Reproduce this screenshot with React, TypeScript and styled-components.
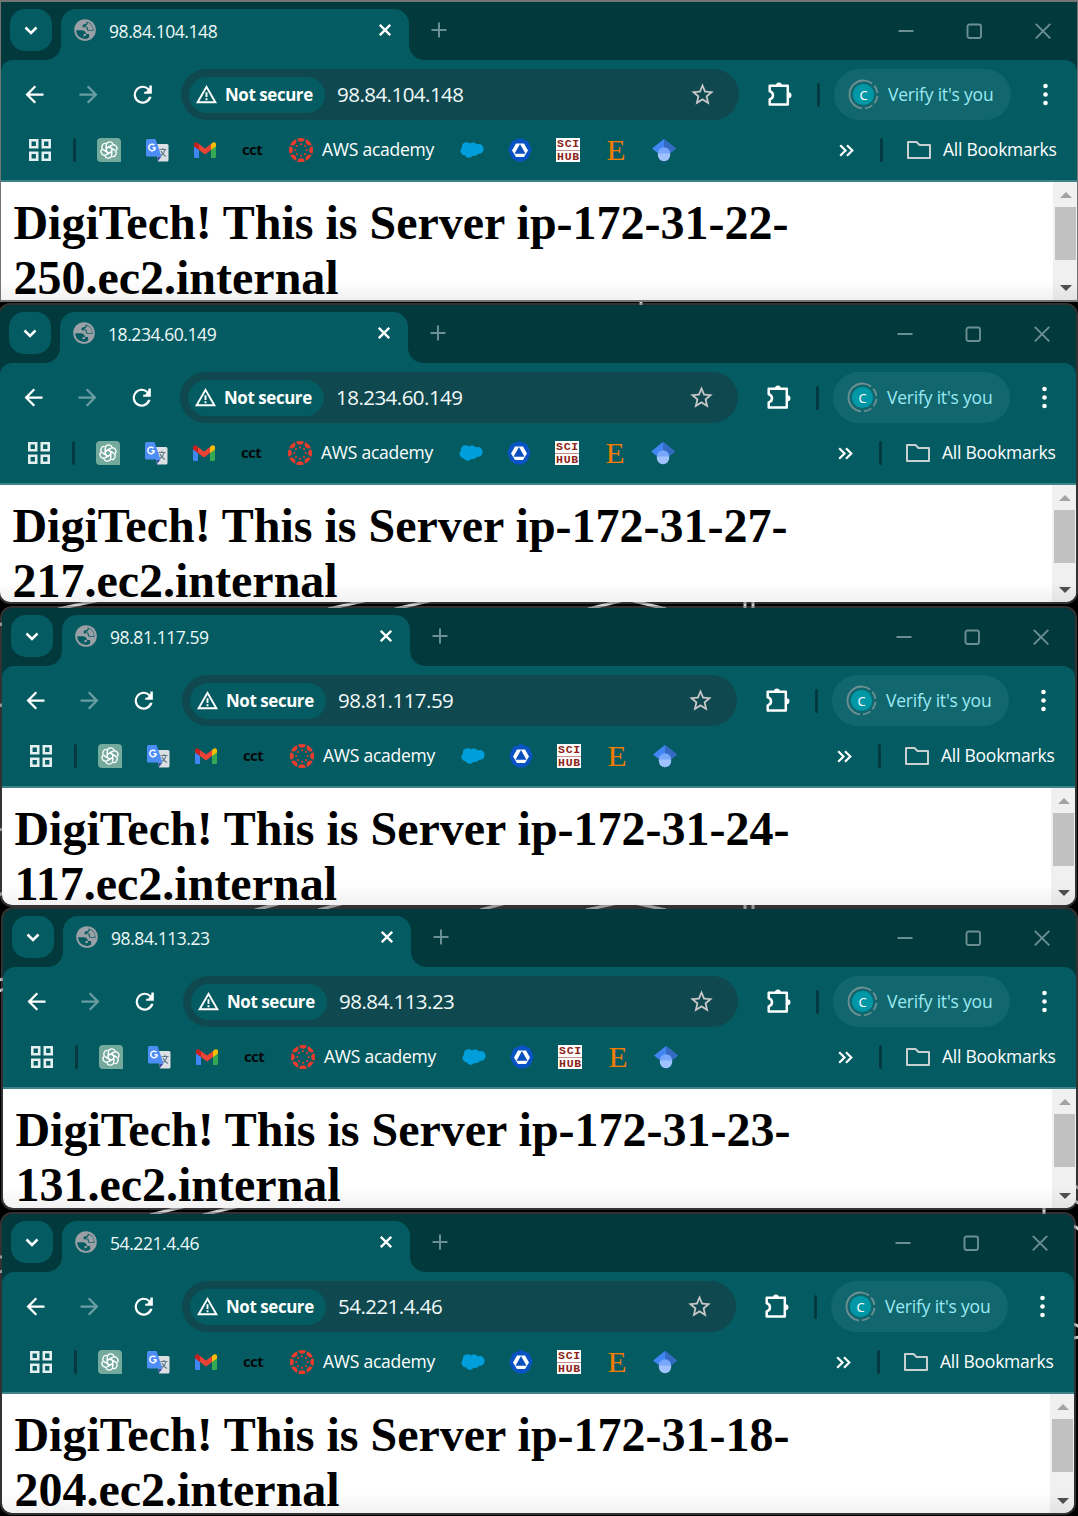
import React from "react";
import styled, { createGlobalStyle } from "styled-components";

const UI_FONT = '"Segoe UI", "Open Sans", "Noto Sans", sans-serif';

const c = {
  strip: "#02393d",
  frame: "#045c62",
  omnibox: "#0f484f",
  pill: "#11676d",
  edge: "#3e8389",
  divider: "#023a3f",
  muted: "#6b8f92",
  white: "#ffffff",
};

const GlobalStyle = createGlobalStyle`
  html, body { margin: 0; padding: 0; background: #000; }
  * { box-sizing: border-box; }
  svg { display: block; flex: none; }
`;

const Desktop = styled.main`
  position: relative;
  width: 1078px;
  height: 1516px;
  overflow: hidden;
  background: #000;
  display: flex;
  flex-direction: column;
  font-family: ${UI_FONT};
`;

const Wallpaper = styled.svg`
  position: absolute;
  inset: 0;
`;

interface Frame {
  left: number;
  right: number;
  gap: number;
  height: number;
  square?: boolean;
}

const Window = styled.section<{ $f: Frame }>`
  position: relative;
  flex: none;
  display: flex;
  flex-direction: column;
  height: ${(p) => p.$f.height}px;
  margin: ${(p) => p.$f.gap}px ${(p) => p.$f.right}px 0 ${(p) => p.$f.left}px;
  border-style: solid;
  border-color: ${(p) => (p.$f.square ? "#747474" : "rgba(100, 100, 100, 0.5)")};
  border-width: ${(p) => (p.$f.square ? "2px 1px" : "2px")};
  border-radius: ${(p) => (p.$f.square ? 0 : 12)}px;
  background: ${c.strip};
  background-clip: padding-box;
  overflow: hidden;
`;

const TabStrip = styled.header`
  flex: none;
  height: 58px;
  display: flex;
  padding: 7px 25px 0 9px;
`;

const TabSearch = styled.button`
  width: 42px;
  height: 42px;
  margin: 0 9px 0 0;
  padding: 0;
  border: 0;
  border-radius: 15px;
  background: ${c.frame};
  display: grid;
  place-items: center;
`;

const Tab = styled.div`
  position: relative;
  width: 348px;
  height: 51px;
  padding: 0 18px 9px 13px;
  display: flex;
  align-items: center;
  border-radius: 15px 15px 0 0;
  background: ${c.frame};
  &::before,
  &::after {
    content: "";
    position: absolute;
    bottom: 0;
    width: 15px;
    height: 15px;
  }
  &::before {
    left: -15px;
    background: radial-gradient(circle at 0 0, transparent 14.5px, ${c.frame} 15.2px);
  }
  &::after {
    right: -15px;
    background: radial-gradient(circle at 100% 0, transparent 14.5px, ${c.frame} 15.2px);
  }
`;

const TabTitle = styled.span`
  flex: 1;
  margin-left: 13px;
  padding-top: 2px;
  font-size: 17.5px;
  letter-spacing: -0.43px;
  line-height: 24px;
  color: #eef8f8;
`;

const NewTab = styled.div`
  width: 42px;
  height: 42px;
  margin-left: 9px;
  display: grid;
  place-items: center;
`;

const Controls = styled.div`
  margin-left: auto;
  height: 44px;
  display: flex;
  align-items: center;
  gap: 51px;
`;

const Chrome = styled.div`
  flex: none;
  height: 122px;
  background: ${c.frame};
  border-bottom: 2px solid ${c.edge};
  border-radius: 12px 12px 0 0;
`;

const Toolbar = styled.div`
  height: 69px;
  padding: 9px 18.5px 9px 19.5px;
  display: flex;
  align-items: center;
`;

const Nav = styled.nav`
  display: flex;
  gap: 27px;
  margin-right: 25.5px;
`;

const Omnibox = styled.div`
  flex: 1;
  height: 51px;
  padding: 0 23px 0 8px;
  border-radius: 26px;
  background: ${c.omnibox};
  display: flex;
  align-items: center;
`;

const SecurityChip = styled.div`
  width: 136px;
  height: 36px;
  padding-left: 6px;
  border-radius: 18px;
  background: ${c.frame};
  display: flex;
  align-items: center;
  gap: 7px;
  font-size: 16.9px;
  font-weight: 700;
  letter-spacing: -0.4px;
  color: #fff;
  white-space: nowrap;
  span {
    padding-bottom: 1px;
  }
`;

const Address = styled.span`
  flex: 1;
  margin-left: 12px;
  padding-bottom: 2px;
  font-size: 20.5px;
  letter-spacing: -0.53px;
  line-height: 30px;
  color: #f2fafa;
`;

const Divider = styled.i<{ $l: number; $r: number }>`
  width: 3px;
  height: 24px;
  margin: 0 ${(p) => p.$r}px 0 ${(p) => p.$l}px;
  border-radius: 2px;
  background: ${c.divider};
`;

const Extensions = styled.div`
  margin-left: 27px;
`;

const Profile = styled.div`
  width: 177px;
  height: 51px;
  padding-left: 14px;
  margin-right: 20.5px;
  border-radius: 26px;
  background: ${c.pill};
  display: flex;
  align-items: center;
  gap: 9px;
  font-size: 17.5px;
  letter-spacing: -0.2px;
  color: #9be9f4;
  white-space: nowrap;
`;

const Lifted = styled.span`
  padding-bottom: 2px;
`;

const Avatar = styled.div`
  position: relative;
  width: 31px;
  height: 31px;
  display: grid;
  place-items: center;
  color: #fff;
  font: 13px/16px "Noto Sans", sans-serif;
  svg {
    position: absolute;
    inset: 0;
  }
  span {
    position: relative;
  }
`;

const Bookmarks = styled.div`
  height: 42px;
  padding: 0 21px 0 28px;
  display: flex;
  align-items: center;
  color: #fff;
  font-size: 17.5px;
  letter-spacing: -0.24px;
  white-space: nowrap;
`;

const Links = styled.div`
  display: flex;
  align-items: center;
  gap: 24px;
`;

const Labelled = styled.div<{ $gap: number; $w: number }>`
  display: flex;
  align-items: center;
  gap: ${(p) => p.$gap}px;
  width: ${(p) => p.$w}px;
`;

const Cct = styled.span`
  width: 24px;
  text-align: center;
  font: 700 15px ${UI_FONT};
  letter-spacing: -0.6px;
  color: #04090a;
  padding: 0 2px 3px 0;
`;

const SciHub = styled.div`
  width: 24px;
  height: 24px;
  background: #fff;
  color: #8b2418;
  font: 700 11.5px/12px "Liberation Mono", monospace;
  text-align: center;
  letter-spacing: 0.7px;
  display: flex;
  flex-direction: column;
  span {
    height: 12px;
    padding-left: 1px;
  }
  span + span {
    border-top: 1px solid #c78e88;
  }
`;

const Elsevier = styled.span`
  width: 24px;
  text-align: center;
  font: 30px/24px "Liberation Serif", serif;
  color: #f57c00;
  transform: scaleX(1.04);
`;

const Page = styled.div`
  flex: 1;
  min-height: 0;
  display: flex;
  background: #fff;
  position: relative;
  &::after {
    content: "";
    position: absolute;
    left: 0;
    right: 0;
    bottom: 0;
    height: 20px;
    background: linear-gradient(rgba(0, 0, 0, 0), rgba(0, 0, 0, 0.055));
  }
`;

const Heading = styled.h1`
  flex: 1;
  margin: 0;
  padding: 13px 12px 0 12.4px;
  font: 700 48px/55px "Liberation Serif", "Times New Roman", serif;
  color: #000;
`;

const Scrollbar = styled.div`
  width: 24px;
  background: #f0f0f0;
  display: flex;
  flex-direction: column;
  align-items: center;
  padding: 10px 0 9px 1px;
`;

const Thumb = styled.div`
  width: 21px;
  height: 53px;
  margin: 9px 0 auto;
  background: #c1c1c1;
`;

const Arrow = styled.i<{ $down?: boolean }>`
  border: 6px solid transparent;
  border-top: ${(p) => (p.$down ? "6px solid #4f4f4f" : "0")};
  border-bottom: ${(p) => (p.$down ? "0" : "6px solid #a3a3a3")};
`;

const Glyph = ({ d, size = 27, color = c.white }: { d: string; size?: number; color?: string }) => (
  <svg width={size} height={size} viewBox="0 0 24 24" fill={color} fillRule="evenodd">
    <path d={d} />
  </svg>
);

const BACK = "M20 11H7.83l5.59-5.59L12 4l-8 8 8 8 1.41-1.41L7.83 13H20z";
const FORWARD = "M12 4l-1.41 1.41L16.17 11H4v2h12.17l-5.58 5.59L12 20l8-8z";
const RELOAD =
  "M17.9 6.6A8 8 0 1 0 20 14h-2.200A6 6 0 1 1 16.600 8.100L15.200 9.500H13.500V11.300H20.300V4H18.200z";
const STAR =
  "M22 9.24l-7.19-.62L12 2 9.19 8.63 2 9.24l5.46 4.73L5.82 21 12 17.27 18.18 21l-1.63-7.03zM12 15.4l-3.76 2.27 1-4.28-3.32-2.88 4.38-.38L12 6.1l1.71 4.04 4.38.38-3.32 2.88 1 4.28z";
const WARNING = "M1 21L12 2l11 19zM4.5 19h15L12 6zM11 9.7h2v5h-2zM11 16h2v2h-2z";

const Globe = () => (
  <svg width="22" height="22" viewBox="0 0 22 22">
    <circle cx="11" cy="11" r="10.8" fill="#9aa0a6" />
    <path
      d="M2.200 11.200h5.300c2.800 0 4.300 1.400 4.400 3.800H9.500v4.600C5 18.800 2.200 15.300 2.200 11.200zM12.600 2.400c.3 1.900-.4 2.700-1.800 2.800-1.400 0-2.200.6-2.200 1.700v1.300h2.900c.8 0 1.200.4 1.200 1.200 0 1.600.9 2.400 2.400 2.400h4.500c0-4.800-3-8.500-7-9.400z"
      fill={c.frame}
    />
    <path
      d="M13.700 3.600c2.800.9 5 3.500 5.400 6.700-1 .9-2.300 1-3.700.8-1.300-.2-1.700-1-1.700-2.200 0-.8-.4-1.400-1.200-1.400h-1.600c.2-.8.8-.9 1.500-1.200.9-.5 1.300-1.400 1.300-2.700z"
      fill="#9aa0a6"
    />
    <path d="M11.900 15h3.200v3.600l-1.600 1c-1.500.5-2.700.6-4 .3V17h2.400z" fill={c.frame} />
  </svg>
);

const Grid = () => (
  <svg width="22" height="22" fill="none" stroke="#e4f0f0" strokeWidth="2.6">
    <path d="M1.3 1.3h6.9v6.9H1.3zM13.8 1.3h6.9v6.9h-6.9zM1.3 13.8h6.9v6.9H1.3zM13.8 13.8h6.9v6.9h-6.9z" />
  </svg>
);

const ChatGpt = () => (
  <svg width="24" height="24" viewBox="0 0 24 24">
    <path d="M4 0h16a4 4 0 0 1 4 4v20H4a4 4 0 0 1-4-4V4a4 4 0 0 1 4-4z" fill="#74aa9c" />
    <g fill="none" stroke="#fff" strokeWidth="1.25" strokeLinejoin="round">
      {[0, 60, 120, 180, 240, 300].map((a) => (
        <path
          key={a}
          transform={`rotate(${a} 12 12)`}
          d="M9.3 13.6V7.3c0-4 5.6-4.8 6.7-1.3M9.3 10.4L14.6 7.4"
        />
      ))}
    </g>
  </svg>
);

const Translate = () => (
  <svg width="24" height="24" viewBox="0 0 24 24">
    <path d="M11 6h11a1.500 1.500 0 0 1 1.500 1.500V22a1.500 1.500 0 0 1-1.500 1.500H13z" fill="#dcdfe3" />
    <path d="M12.500 18.500h4L13 23z" fill="#3949ab" />
    <path d="M2.500 1h8l6 17.500h-14A1.500 1.500 0 0 1 1 17V2.500A1.500 1.500 0 0 1 2.500 1z" fill="#4c8df6" />
    <path d="M10.500 9.700H7.500M10.400 9.700A3.300 3.300 0 1 1 9.500 7.200" fill="none" stroke="#fff" strokeWidth="1.500" />
    <path d="M14.500 11.500h7M18 10v1.500M20 11.500c-.5 2.800-2.500 5-4 6M16 13c1 2.500 3 4.500 5 5.500" fill="none" stroke="#607d8b" strokeWidth="1.200" />
  </svg>
);

const Gmail = () => (
  <svg width="24" height="24" viewBox="0 0 24 24">
    <path d="M1 8l5 3.500V20H2.500A1.500 1.500 0 0 1 1 18.500z" fill="#4285f4" />
    <path d="M23 8l-5 3.500V20h3.500a1.500 1.500 0 0 0 1.500-1.500z" fill="#34a853" />
    <path d="M18 6l1.800-1.400C21.200 3.600 23 4.600 23 6.300V8.500L18 12z" fill="#fbbc04" />
    <path d="M6 6l6 4.500L18 6v6l-6 4.500L6 12z" fill="#ea4335" />
    <path d="M1 8.500V6.300c0-1.700 1.800-2.700 3.200-1.700L6 6v6z" fill="#c5221f" />
  </svg>
);

const Canvas = () => (
  <svg width="24" height="24" viewBox="0 0 24 24" fill="#ea3b2c">
    {[0, 45, 90, 135, 180, 225, 270, 315].map((a) => (
      <g key={a} transform={`rotate(${a} 12 12)`}>
        <path d="M8.200 .6Q12-.6 15.800.6A3.850 3.850 0 0 1 8.200.6z" />
        <circle cx="12" cy="6.300" r="1.050" />
      </g>
    ))}
  </svg>
);

const Salesforce = () => (
  <svg width="24" height="24" viewBox="0 0 24 24" fill="#009edb">
    <circle cx="6.600" cy="9" r="4.800" />
    <circle cx="13" cy="8.600" r="4" />
    <circle cx="18.700" cy="11" r="4.900" />
    <circle cx="4.700" cy="13" r="4.200" />
    <circle cx="8.800" cy="15.500" r="4.300" />
    <circle cx="14" cy="14" r="4" />
  </svg>
);

const Octagon = () => (
  <svg width="24" height="24" viewBox="0 0 24 24">
    <path d="M12 0l8.300 3.500L23.700 12l-3.400 8L15 23.500H9L3.700 20 .3 12l3.400-8.500z" fill="#0a53c4" />
    <path d="M8 5.500h8l4 7-4 6.500H8l-4-6.500z" fill="#fff" />
    <path d="M12 6l5.500 9.800h-11z" fill="#0a4fbd" />
  </svg>
);

const Scholar = () => (
  <svg width="24" height="24" viewBox="0 0 24 24">
    <path d="M12 1l12 9.500-5 4H5l-5-4z" fill="#4285f4" />
    <path d="M12 1l12 9.500-6 4.500-6-5z" fill="#356ac3" />
    <circle cx="12" cy="17" r="6.200" fill="#a0c3ff" />
    <path d="M5.800 15.500a6.200 6.200 0 0 1 12.400 0z" fill="#76a7fa" />
  </svg>
);

const Puzzle = () => (
  <svg width="27" height="27" viewBox="0 0 27 27">
    <path
      d="M3.700 4.700H21.800V23.600H3.700V18.400C5.900 17.800 7 16.400 7 14.300S5.900 10.800 3.700 10.200z"
      fill="none"
      stroke="#fff"
      strokeWidth="2.500"
      strokeLinejoin="round"
    />
    <path d="M10 4.300a2.900 2.900 0 0 1 5.800 0zM22.500 11.200a3 3 0 0 1 0 6z" fill="#fff" />
  </svg>
);

const Folder = () => (
  <svg width="24" height="20" fill="none" stroke="#c9d0d1" strokeWidth="2" strokeLinejoin="round">
    <path d="M1 2h8.500l3 3H23v13H1z" />
  </svg>
);

const Overflow = styled.div`
  margin-left: auto;
`;

interface Server extends Frame {
  ip: string;
  host: string;
}

const servers: Server[] = [
  { ip: "98.84.104.148", host: "ip-172-31-22-250", left: 0, right: 0, gap: 0, height: 302, square: true },
  { ip: "18.234.60.149", host: "ip-172-31-27-217", left: -2, right: 0, gap: 1, height: 301 },
  { ip: "98.81.117.59", host: "ip-172-31-24-117", left: 0, right: 1, gap: 2, height: 301 },
  { ip: "98.84.113.23", host: "ip-172-31-23-131", left: 1, right: 0, gap: 0, height: 303 },
  { ip: "54.221.4.46", host: "ip-172-31-18-204", left: 0, right: 2, gap: 2, height: 303 },
];

const BrowserWindow = ({ server }: { server: Server }) => (
  <Window $f={server}>
    <TabStrip>
      <TabSearch>
        <svg width="14" height="9" fill="none" stroke="#fff" strokeWidth="2.500">
          <path d="M1.500 1.500L7 7l5.500-5.500" />
        </svg>
      </TabSearch>
      <Tab>
        <Globe />
        <TabTitle>{server.ip}</TabTitle>
        <svg width="12" height="12" stroke="#fff" strokeWidth="2.300">
          <path d="M.8.8l10.400 10.400M11.200.8L.8 11.200" />
        </svg>
      </Tab>
      <NewTab>
        <svg width="16" height="16" stroke={c.muted} strokeWidth="2">
          <path d="M8 .5v15M.5 8h15" />
        </svg>
      </NewTab>
      <Controls>
        <svg width="18" height="16" stroke={c.muted} strokeWidth="2">
          <path d="M1.500 8h15" />
        </svg>
        <svg width="17" height="16" fill="none" stroke={c.muted} strokeWidth="1.900">
          <rect x="1.500" y="1.500" width="13.500" height="13.500" rx="2" />
        </svg>
        <svg width="18" height="16" stroke={c.muted} strokeWidth="1.900">
          <path d="M1.800.8l14.500 14.500M16.300.8L1.800 15.300" />
        </svg>
      </Controls>
    </TabStrip>
    <Chrome>
      <Toolbar>
        <Nav>
          <Glyph d={BACK} />
          <Glyph d={FORWARD} color="#6a9da1" />
          <Glyph d={RELOAD} />
        </Nav>
        <Omnibox>
          <SecurityChip>
            <Glyph d={WARNING} size={23} />
            <span>Not secure</span>
          </SecurityChip>
          <Address>{server.ip}</Address>
          <Glyph d={STAR} color="#c7c7c7" />
        </Omnibox>
        <Extensions>
          <Puzzle />
        </Extensions>
        <Divider $l={24} $r={14} />
        <Profile>
          <Avatar>
            <svg width="31" height="31" viewBox="0 0 31 31">
              <circle
                cx="15.500"
                cy="15.500"
                r="14"
                fill="none"
                stroke="#6f9093"
                strokeWidth="1.800"
                strokeDasharray="8 3 8 3 8 3 8 3 43.960 0"
                transform="rotate(-85 15.500 15.500)"
              />
              <circle cx="15.500" cy="15.500" r="10.600" fill="#0097a7" />
            </svg>
            <span>C</span>
          </Avatar>
          <Lifted>Verify it's you</Lifted>
        </Profile>
        <svg width="27" height="27" fill="#fff">
          <circle cx="13.500" cy="5" r="2.300" />
          <circle cx="13.500" cy="13.500" r="2.300" />
          <circle cx="13.500" cy="22" r="2.300" />
        </svg>
      </Toolbar>
      <Bookmarks>
        <Grid />
        <Divider $l={22} $r={21} />
        <Links>
          <ChatGpt />
          <Translate />
          <Gmail />
          <Cct>cct</Cct>
          <Labelled $gap={9} $w={147}>
            <Canvas />
            <Lifted>AWS academy</Lifted>
          </Labelled>
          <Salesforce />
          <Octagon />
          <SciHub>
            <span>SCI</span>
            <span>HUB</span>
          </SciHub>
          <Elsevier>E</Elsevier>
          <Scholar />
        </Links>
        <Overflow>
          <svg width="15" height="13" fill="none" stroke="#fff" strokeWidth="2.200">
            <path d="M1.200 1.200l5.300 5.300-5.300 5.300M8 1.200l5.300 5.300L8 11.800" />
          </svg>
        </Overflow>
        <Divider $l={26} $r={24} />
        <Labelled $gap={12} $w={149}>
          <Folder />
          <Lifted>All Bookmarks</Lifted>
        </Labelled>
      </Bookmarks>
    </Chrome>
    <Page>
      <Heading>{`DigiTech! This is Server ${server.host}.ec2.internal`}</Heading>
      <Scrollbar>
        <Arrow />
        <Thumb />
        <Arrow $down />
      </Scrollbar>
    </Page>
  </Window>
);

export default function App() {
  return (
    <>
      <GlobalStyle />
      <Desktop>
        <Wallpaper width="1078" height="1516" stroke="#cfcfcf" strokeWidth="3" fill="none">
          <path d="M641 298v8M58 609l42-9M328 609l40-9M395 609l38-9M588 609l36-9M630 600l36 9M745 600v10M753 600v10" />
          <path d="M255 910l30-8M318 910l30-8M480 910l30-8M586 910l36-8M630 902l36 8M745 902v9M753 902v9" />
          <path d="M150 1215l40-10M203 1215l40-10M1044 1205v12M-1 625l6-2M-1 706l5-2M-1 830l4-1M-1 895l4-2M-1 980l5-1M-1 991l5-2M-1 1257l4 0M-1 1272l4-1M1075 1186l5 3M1075 1201l5 3M1074 1226l6 4M1074 1324l6 3M1074 1338l6-1" />
        </Wallpaper>
        {servers.map((s) => (
          <BrowserWindow key={s.ip} server={s} />
        ))}
      </Desktop>
    </>
  );
}
